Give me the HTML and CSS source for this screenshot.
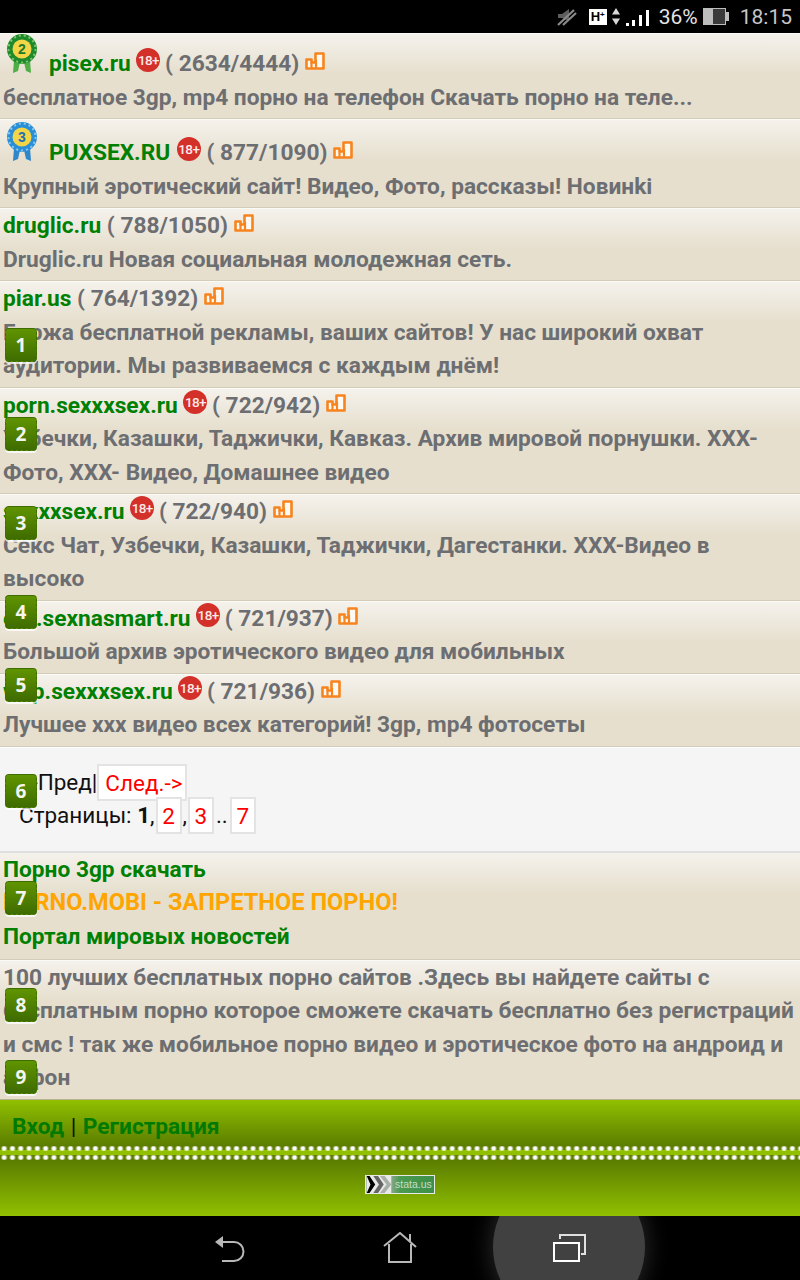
FILE: index.html
```html
<!DOCTYPE html>
<html lang="ru">
<head>
<meta charset="utf-8">
<title>Топ</title>
<link rel="stylesheet" href="styles.css">
</head>
<body>
<svg class="sprite" width="0" height="0" aria-hidden="true">
  <symbol id="bars" viewBox="0 0 20 18"><path d="M1.500 7.500h5v3h4V1.500h8v15h-17z" fill="#fdfaf4" stroke="#f7841e" stroke-width="2.600" stroke-linejoin="round"/><path d="M6.500 10.500v6M11 8v8.500" stroke="#f7841e" stroke-width="2.200" fill="none"/></symbol>
</svg>
<div class="screen">
  <header class="status">
    <svg class="st-mute" viewBox="0 0 20 18" width="20" height="18"><path d="M1 6h4l7-5v12l-7-3H1z" fill="#5e5e5e"/><path d="M1 17L17 2M6 17L19 5" stroke="#8a8a8a" stroke-width="2.200" fill="none"/></svg>
    <span class="st-h">H<sup>+</sup></span>
    <svg class="st-arrows" viewBox="0 0 8 17" width="8" height="17"><path d="M4 0l4 6.500H0zM4 17L0 10.500h8z" fill="#d8d8d8"/></svg>
    <svg class="st-signal" viewBox="0 0 23 16" width="23" height="16"><path d="M0 13h3v3H0zM6 10h3v6H6zM13 5h3v11h-3zM20 0h3v16h-3z" fill="#fff"/></svg>
    <span class="st-pct">36%</span>
    <svg class="st-batt" viewBox="0 0 26 17" width="26" height="17"><path d="M0 0h23v4h3v9h-3v4H0z" fill="#bdbdbd"/><rect x="10" y="1" width="12" height="15" fill="#3a3a3a"/></svg>
    <span class="st-time">18:15</span>
  </header>

  <main class="page">
    <section class="row row-medal row-first">
      <div class="title"><svg class="medal" viewBox="0 0 32 40" width="32" height="40"><path d="M8 26l-1 13 5-2 2-9zM24 26l1 13-5-2-2-9z" fill="#4fae46"/><circle cx="16" cy="15" r="15" fill="#1f8a2c"/><circle cx="16" cy="15" r="13.500" fill="none" stroke="#7cc86a" stroke-dasharray="2 3" stroke-width="2"/><circle cx="16" cy="15" r="9.500" fill="#f3d548"/><text x="16" y="20" class="medal-n medal-green">2</text></svg><a class="site">pisex.ru</a> <span class="adult">18+</span> <span class="score">( 2634/4444)</span> <svg class="bars"><use href="#bars"/></svg></div>
      <p class="desc">бесплатное 3gp, mp4 порно на телефон Скачать порно на теле...</p>
    </section>
    <section class="row row-medal row-second">
      <div class="title"><svg class="medal" viewBox="0 0 32 40" width="32" height="40"><path d="M8 26l-1 13 5-2 2-9zM24 26l1 13-5-2-2-9z" fill="#2f86c8"/><circle cx="16" cy="15" r="15" fill="#2a8fd6"/><circle cx="16" cy="15" r="13.500" fill="none" stroke="#8cc8ee" stroke-dasharray="2 3" stroke-width="2"/><circle cx="16" cy="15" r="9.500" fill="#f3d548"/><text x="16" y="20" class="medal-n medal-blue">3</text></svg><a class="site">PUXSEX.RU</a> <span class="adult">18+</span> <span class="score">( 877/1090)</span> <svg class="bars"><use href="#bars"/></svg></div>
      <p class="desc">Крупный эротический сайт! Видео, Фото, рассказы! Новинkі</p>
    </section>
    <section class="row">
      <div class="title"><a class="site">druglic.ru</a> <span class="score">( 788/1050)</span> <svg class="bars"><use href="#bars"/></svg></div>
      <p class="desc">Druglic.ru Новая социальная молодежная сеть.</p>
    </section>
    <section class="row">
      <div class="title"><a class="site">piar.us</a> <span class="score">( 764/1392)</span> <svg class="bars"><use href="#bars"/></svg></div>
      <p class="desc">Биржа бесплатной рекламы, ваших сайтов! У нас широкий охват аудитории. Мы развиваемся с каждым днём!</p>
    </section>
    <section class="row">
      <div class="title"><a class="site">porn.sexxxsex.ru</a> <span class="adult">18+</span> <span class="score">( 722/942)</span> <svg class="bars"><use href="#bars"/></svg></div>
      <p class="desc">Узбечки, Казашки, Таджички, Кавказ. Архив мировой порнушки. ХХХ- Фото, ХХХ- Видео, Домашнее видео</p>
    </section>
    <section class="row">
      <div class="title"><a class="site">sexxxsex.ru</a> <span class="adult">18+</span> <span class="score">( 722/940)</span> <svg class="bars"><use href="#bars"/></svg></div>
      <p class="desc">Секс Чат, Узбечки, Казашки, Таджички, Дагестанки. ХХХ-Видео в высоко</p>
    </section>
    <section class="row">
      <div class="title"><a class="site">ero.sexnasmart.ru</a> <span class="adult">18+</span> <span class="score">( 721/937)</span> <svg class="bars"><use href="#bars"/></svg></div>
      <p class="desc">Большой архив эротического видео для мобильных</p>
    </section>
    <section class="row">
      <div class="title"><a class="site">wap.sexxxsex.ru</a> <span class="adult">18+</span> <span class="score">( 721/936)</span> <svg class="bars"><use href="#bars"/></svg></div>
      <p class="desc">Лучшее ххх видео всех категорий! 3gp, mp4 фотосеты</p>
    </section>

    <nav class="pager">
      <div class="pager-line pager-top"><span>&lt;-Пред|</span><a class="pg pg-next">След.-&gt;</a></div>
      <div class="pager-line pager-bottom"><span>Страницы:&nbsp;<b>1</b>,</span><a class="pg">2</a><span>,</span><a class="pg">3</a><span class="dots">..</span><a class="pg">7</a></div>
    </nav>

    <section class="links">
      <a class="site">Порно 3gp скачать</a>
      <a class="orange">PORNO.MOBI - ЗАПРЕТНОЕ ПОРНО!</a>
      <a class="site">Портал мировых новостей</a>
    </section>

    <section class="about">
      <p class="desc">100 лучших бесплатных порно сайтов .Здесь вы найдете сайты с бесплатным порно которое сможете скачать бесплатно без регистраций и смс ! так же мобильное порно видео и эротическое фото на андроид и айфон</p>
    </section>

    <footer class="foot">
      <div class="foot-top"><a class="foot-link">Вход</a> <span class="foot-sep">|</span> <a class="foot-link">Регистрация</a></div>
      <div class="stitch"></div>
      <div class="foot-bottom">
        <div class="counter"><svg viewBox="0 0 26 18" width="26" height="18"><path d="M0 0h26v18H0z" fill="#e8e8e8"/><path d="M0 0h3l6 9-6 9H0l4-9z" fill="#000"/><path d="M7 0h5l6 9-6 9H7l6-9z" fill="#666"/><path d="M14 0h5l7 9-7 9h-5l7-9z" fill="#a8b0a8"/></svg><span>stata.us</span></div>
      </div>
    </footer>
  </main>

  <div class="key k1">1</div>
  <div class="key k2">2</div>
  <div class="key k3">3</div>
  <div class="key k4">4</div>
  <div class="key k5">5</div>
  <div class="key k6">6</div>
  <div class="key k7">7</div>
  <div class="key k8">8</div>
  <div class="key k9">9</div>

  <div class="navbar">
    <div class="recent-glow"></div>
    <svg class="nav-back" viewBox="0 0 32 30" width="32" height="30"><path d="M1 9l8-6v12z" fill="#b8b8b8"/><path d="M8 9h12a9 9 0 0 1 0 19H8" fill="none" stroke="#b8b8b8" stroke-width="2"/></svg>
    <svg class="nav-home" viewBox="0 0 34 32" width="34" height="32"><path d="M1 14L17 1l16 14M6 12v18h22V12M27 9V2" fill="none" stroke="#b8b8b8" stroke-width="2"/></svg>
    <svg class="nav-recent" viewBox="0 0 34 28" width="34" height="28"><path d="M7 5V1h25v19h-4" fill="none" stroke="#e0e0e0" stroke-width="2"/><rect x="1" y="9" width="25" height="18" fill="none" stroke="#fff" stroke-width="2"/></svg>
  </div>
</div>
</body>
</html>
```
FILE: styles.css
```css
* { box-sizing: border-box; }
html, body { margin: 0; padding: 0; }
body { background: #000; font-family: Roboto, "Noto Sans", sans-serif; }
.sprite { position: absolute; }
.screen { position: relative; width: 800px; height: 1280px; overflow: hidden; display: flex; flex-direction: column; background: #000; }

.status { height: 33px; flex: none; display: flex; align-items: center; justify-content: flex-end; padding-right: 8px; color: #e4e4e4; font-size: 21px; }
.st-mute { margin-right: 12px; }
.st-h { width: 18px; height: 16px; background: #fff; color: #000; font: 700 13px/16px "Liberation Sans", sans-serif; text-align: center; margin-right: 5px; }
.st-h sup { font-size: 8px; line-height: 0; vertical-align: 4px; }
.st-arrows { margin-right: 6px; }
.st-signal { margin-right: 10px; margin-top: 2px; }
.st-pct { margin-right: 5px; }
.st-batt { margin-right: 11px; }
.st-time { color: #c6c6c6; }

.page { flex: none; height: 1183px; display: flex; flex-direction: column; background: #e6dfce; }
.row { background: linear-gradient(#f5f2ec, #e6dfce 40px); border-top: 1px solid #fafaf6; border-bottom: 1px solid #d4ccb8; padding: 0 6px 4px 3px; flex: none; }
.title, .desc { font-size: 22.700px; line-height: 33.500px; font-weight: 700; color: #6d6e71; margin: 0; }
.row-medal .title { position: relative; padding-left: 46px; white-space: nowrap; }
.row-first { padding-bottom: 3px; }
.row-first .title { height: 47px; line-height: 60px; }
.row-second .title { height: 50px; line-height: 66px; }
.medal { position: absolute; left: 3px; top: 0; }
.row-second .medal { top: 2px; }
.medal-n { font: 700 14px "Liberation Sans", sans-serif; text-anchor: middle; }
.medal-green { fill: #1c7a2a; }
.medal-blue { fill: #1f6fb5; }
.site { color: #008000; font-weight: 700; }
.orange { color: #ffa500; font-weight: 700; font-size: 23.600px; }
.adult { display: inline-block; width: 24px; height: 24px; border-radius: 50%; background: #d3302a; color: #fbe9e7; font: 500 13.500px/24px Roboto, sans-serif; text-align: center; vertical-align: 6px; letter-spacing: -.6px; margin-right: -1px; }
.row-second .adult { margin-left: 1px; margin-right: 0; }
.score { color: #6d6e71; }
.bars { width: 20px; height: 18px; vertical-align: 1px; }

.pager { flex: none; height: 106px; background: #f5f5f5; border-top: 1px solid #fff; border-bottom: 2px solid #dfdfdf; padding-top: 16px; color: #111; font-size: 22.500px; }
.pager-line { display: flex; align-items: flex-start; line-height: 36px; height: 33px; white-space: nowrap; }
.pager-top { padding-left: 20px; }
.pager-bottom { padding-left: 19px; }
.pg { display: block; height: 37px; background: #fff; border: 2px solid #e3e3e3; color: #f00; width: 26px; line-height: 34px; text-align: center; margin: 0 1px; }
.pg-next { width: auto; padding: 0 3px 0 6px; margin: 0; }
.dots { padding: 0 1px; }

.links { flex: none; background: linear-gradient(#f5f2ec, #e6dfce 40px); height: 107px; border-bottom: 1px solid #d4ccb8; padding: 0 3px; font-size: 22.700px; line-height: 33.500px; display: flex; flex-direction: column; }
.about { flex: none; height: 139px; background: linear-gradient(#f5f2ec, #e6dfce 40px); border-top: 1px solid #fafaf6; padding: 0 3px; }

.foot { flex: 1; display: flex; flex-direction: column; background: #6d8e00; border-top: 1px solid #b8b28f; }
.foot-top { height: 46px; padding: 12px 12px 0; background: linear-gradient(#90c000, #5c7d00); font-size: 22.700px; line-height: 30px; font-weight: 700; }
.foot-link { color: #007a00; }
.foot-sep { color: #111; font-weight: 400; margin: 0 1px; }
.stitch {
  height: 14px;
  background-color: #5c7d00;
  background-image:
    radial-gradient(circle at 50% 50%, #fff 0 1.500px, rgba(255,255,255,.45) 2.500px, transparent 3.500px),
    radial-gradient(circle at 50% 50%, #fff 0 1.500px, rgba(255,255,255,.45) 2.500px, transparent 3.500px),
    linear-gradient(#90c000, #90c000);
  background-size: 8.300px 5px, 8.300px 5px, 100% 5px;
  background-repeat: repeat-x, repeat-x, no-repeat;
  background-position: 0 0, 0 100%, 0 50%;
}
.foot-bottom { flex: 1; background: linear-gradient(#5c7d00, #90c000); display: flex; justify-content: center; padding-top: 15px; }
.counter { width: 70px; height: 19px; border: 1px solid #e8e8e8; background: linear-gradient(90deg, #a8b0a8 30%, #4a9a50 50%, #3e9048); display: flex; align-items: center; overflow: hidden; color: #c8dcc8; font: 400 10.500px "Liberation Sans", sans-serif; }
.counter svg { flex: none; width: 26px; height: 17px; }
.counter span { margin-left: 3px; }

.key { position: absolute; left: 5px; width: 32px; height: 34px; border-radius: 4px; background: linear-gradient(#5f9400, #3f6c00); border: 1px dashed #3e6e00; box-shadow: 0 2px 0 rgba(255,255,255,.75); color: #f5f5f0; font: 700 19px/32px "Open Sans", Roboto, sans-serif; text-align: center; }
.k1 { top: 328px; }
.k2 { top: 417px; }
.k3 { top: 506px; }
.k4 { top: 595px; }
.k5 { top: 668px; }
.k6 { top: 774px; }
.k7 { top: 881px; }
.k8 { top: 988px; }
.k9 { top: 1060px; }

.navbar { position: relative; flex: none; height: 64px; background: #000; overflow: hidden; display: flex; align-items: flex-start; }
.recent-glow { position: absolute; left: 493px; top: -45px; width: 152px; height: 152px; border-radius: 50%; background: #414141; box-shadow: 0 0 22px 2px rgba(255,255,255,.16); }
.nav-back { position: absolute; left: 214px; top: 17px; }
.nav-home { position: absolute; left: 383px; top: 16px; }
.nav-recent { position: absolute; left: 553px; top: 18px; }
```
